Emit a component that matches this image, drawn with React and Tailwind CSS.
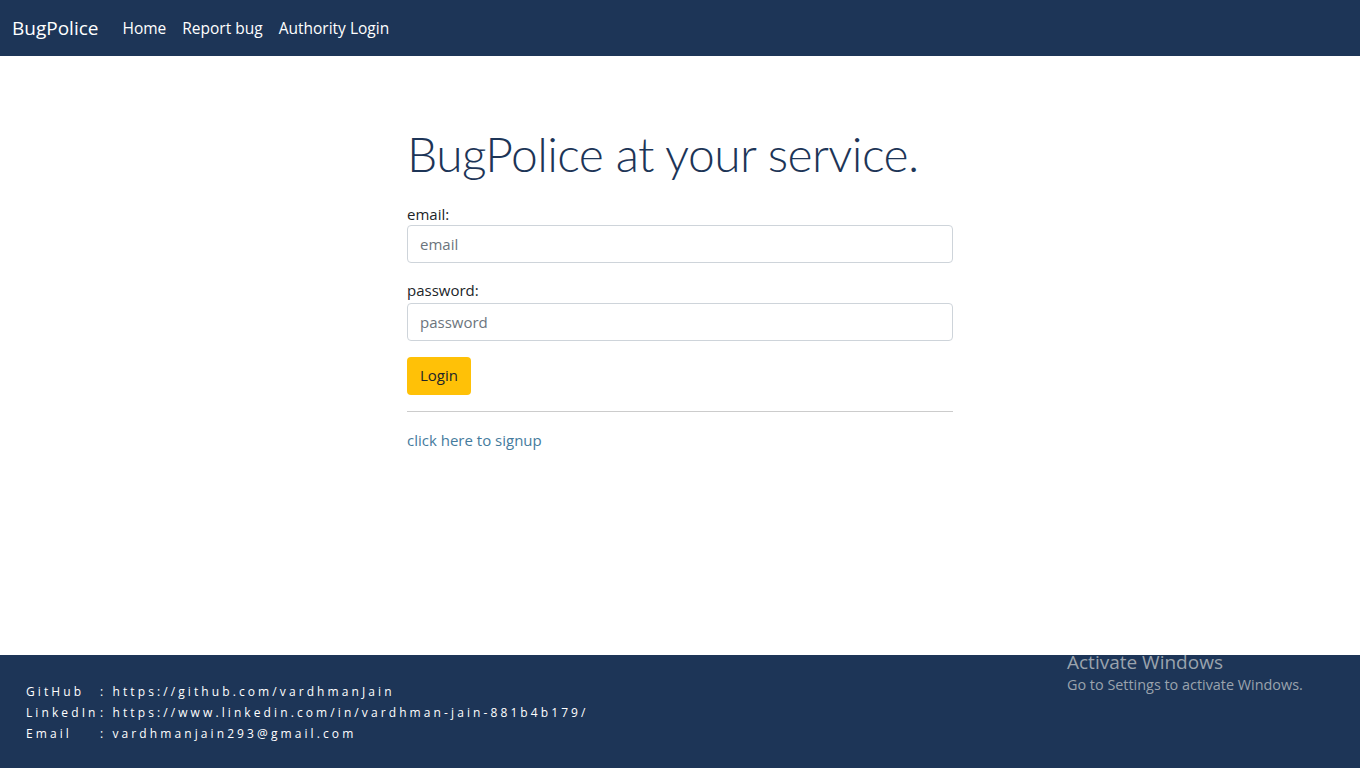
export default function App() {
  return (
    <div className="min-h-screen flex flex-col bg-white font-['Open_Sans',sans-serif] text-[#212529]">
      <nav className="h-14 bg-[#1d3557] flex items-center px-3 pt-[1px]">
        <span className="text-white text-[19px] mr-[24px]">BugPolice</span>
        <div className="flex gap-4 text-white text-[15.5px]">
          <a href="#">Home</a>
          <a href="#">Report bug</a>
          <a href="#">Authority Login</a>
        </div>
      </nav>

      <main className="flex-1 flex justify-center">
        <div className="w-[546px] pt-[69px]">
          <h1 className="text-[48px] font-light font-['Lato',sans-serif] text-[#1d3557] leading-[1.2] tracking-[-0.6px] mb-[20px] whitespace-nowrap">BugPolice at your service.</h1>
          <label className="block text-[15px]">email:</label>
          <input
            placeholder="email"
            className="w-full h-[38px] border border-[#ced4da] rounded px-3 text-[15px] placeholder-[#6c757d] mb-4"
          />
          <label className="block text-[15px] mb-[1px]">password:</label>
          <input
            placeholder="password"
            className="w-full h-[38px] border border-[#ced4da] rounded px-3 text-[15px] placeholder-[#6c757d] mb-4"
          />
          <button className="h-[38px] px-[13px] bg-[#ffc107] rounded text-[15px] text-[#212529]">Login</button>
          <hr className="my-4 border-[#ccc]" />
          <a href="#" className="text-[15px] text-[#457b9d]">click here to signup</a>
        </div>
      </main>

      <footer className="h-[113px] bg-[#1d3557] relative pt-[26px] pl-[26px]">
        <div className="text-white text-[12px] tracking-[3.1px] leading-[21px] whitespace-pre">
          <div><span className="inline-block min-w-[74px]">GitHub</span>: https://github.com/vardhmanJain</div>
          <div><span className="inline-block min-w-[74px]">LinkedIn</span>: https://www.linkedin.com/in/vardhman-jain-881b4b179/</div>
          <div><span className="inline-block min-w-[74px]">Email</span>: vardhmanjain293@gmail.com</div>
        </div>
        <div className="absolute left-[1067px] top-[-4px] text-[#9aa3ad] leading-tight">
          <div className="text-[19px]">Activate Windows</div>
          <div className="text-[14.4px] mt-[1px]">Go to Settings to activate Windows.</div>
        </div>
      </footer>
    </div>
  )
}
